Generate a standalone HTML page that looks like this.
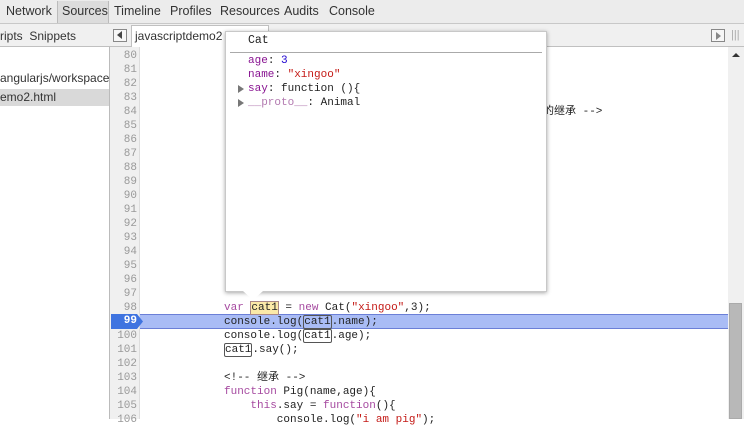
<!DOCTYPE html><html><head><meta charset="utf-8"><style>
*{margin:0;padding:0;box-sizing:border-box}
body{width:744px;height:419px;overflow:hidden;background:#fff;font-family:"Liberation Sans","Noto Sans CJK SC",sans-serif;font-size:12px;color:#222;position:relative}
.a{position:absolute;white-space:pre}
.mono{font-family:"Liberation Mono","Noto Sans CJK SC",monospace;font-size:11px}
.kw{color:#a64aa0}.st{color:#c41a16}.pr{color:#881391}.nu{color:#1c00cf}
.box{border:1px solid #555;border-radius:2px;padding:0}
</style></head><body>
<div class="a" style="left:0;top:0;width:744px;height:24px;background:#ececec;border-bottom:1px solid #c8c8c8"></div>
<div class="a" style="left:6px;top:4px;font-size:12.5px;color:#333">Network</div>
<div class="a" style="left:57px;top:1px;width:52px;height:22px;background:#dcdcdc;border-left:1px solid #bbb;border-right:1px solid #bbb"></div>
<div class="a" style="left:62px;top:4px;font-size:12.5px;color:#333">Sources</div>
<div class="a" style="left:114px;top:4px;font-size:12.5px;color:#333">Timeline</div>
<div class="a" style="left:170px;top:4px;font-size:12.5px;color:#333">Profiles</div>
<div class="a" style="left:220px;top:4px;font-size:12.5px;color:#333">Resources</div>
<div class="a" style="left:284px;top:4px;font-size:12.5px;color:#333">Audits</div>
<div class="a" style="left:329px;top:4px;font-size:12.5px;color:#333">Console</div>
<!-- second row -->
<div class="a" style="left:0;top:24px;width:744px;height:23px;background:#f0f0f0;border-bottom:1px solid #c0c0c0"></div>
<div class="a" style="left:0;top:29px;color:#333">ripts&nbsp; Snippets</div>
<div class="a" style="left:131px;top:25px;width:138px;height:22px;background:#fff;border:1px solid #c0c0c0;border-bottom:none"></div>
<div class="a" style="left:135px;top:29px;color:#333">javascriptdemo2</div>
<div class="a" style="left:113px;top:29px;width:14px;height:13px;border:1px solid #888;background:#f6f6f6"></div>
<div class="a" style="left:117px;top:31px;width:0;height:0;border-top:4px solid transparent;border-bottom:4px solid transparent;border-right:5px solid #444"></div>
<div class="a" style="left:711px;top:29px;width:14px;height:13px;border:1px solid #888;background:#f6f6f6"></div>
<div class="a" style="left:716px;top:32px;width:0;height:0;border-top:4px solid transparent;border-bottom:4px solid transparent;border-left:5px solid #888"></div>
<div class="a" style="left:731px;top:29px;color:#aaa;font-size:11px">|||</div>
<!-- sidebar -->
<div class="a" style="left:0;top:47px;width:110px;height:372px;background:#fff;border-right:1px solid #bbb"></div>
<div class="a" style="left:0;top:71px;color:#333">angularjs/workspace</div>
<div class="a" style="left:0;top:89px;width:109px;height:17px;background:#d9d9d9"></div>
<div class="a" style="left:0;top:90px;color:#333">emo2.html</div>
<!-- gutter -->
<div class="a" style="left:110px;top:47px;width:30px;height:372px;background:#f0f0f0;border-right:1px solid #ddd"></div>
<div class="a mono" style="left:110px;top:49px;width:27px;text-align:right;line-height:14px;color:#999">80
81
82
83
84
85
86
87
88
89
90
91
92
93
94
95
96
97
98

100
101
102
103
104
105
106</div>
<!-- scrollbar -->
<div class="a" style="left:728px;top:47px;width:16px;height:372px;background:#f0f0f0"></div>
<div class="a" style="left:732px;top:53px;width:0;height:0;border-left:4px solid transparent;border-right:4px solid transparent;border-bottom:4px solid #333"></div>
<div class="a" style="left:729px;top:303px;width:13px;height:116px;background:#b8b8b8;border:1px solid #aaa"></div>
<!-- highlight line -->
<div class="a" style="left:140px;top:314px;width:588px;height:15px;background:#a9bcf5;border-top:1px solid #6b7fd7;border-bottom:1px solid #6b7fd7"></div>
<svg class="a" style="left:111px;top:314px" width="32" height="15"><path d="M0 0H26L32 7.5L26 15H0Z" fill="#3f74e0"/></svg>
<div class="a mono" style="left:110px;top:314px;width:27px;text-align:right;line-height:15px;color:#fff;font-weight:bold">99</div>
<!-- code -->
<div class="a mono" style="left:532px;top:105px;line-height:14px">型的继承 --&gt;</div>
<div class="a mono" style="left:224px;top:301px;line-height:14px"><span class="kw">var</span> <span style="background:#fbe9a8;border:1px solid #a88">cat1</span> = <span class="kw">new</span> Cat(<span class="st">"xingoo"</span>,3);
console.log(<span class="box">cat1</span>.name);
console.log(<span class="box">cat1</span>.age);
<span class="box">cat1</span>.say();

&lt;!-- 继承 --&gt;
<span class="kw">function</span> Pig(name,age){
    <span class="kw">this</span>.say = <span class="kw">function</span>(){
        console.log(<span class="st">"i am pig"</span>);</div>
<!-- popup -->
<div class="a" style="left:225px;top:31px;width:322px;height:261px;background:#fff;border:1px solid #c8c8c8;box-shadow:0 1px 4px rgba(0,0,0,.35)"></div>
<svg class="a" style="left:243px;top:291px" width="20" height="10"><path d="M0 0L10 9L20 0Z" fill="#fff"/></svg>
<div class="a mono" style="left:248px;top:34px;font-size:11.5px;color:#222">Cat</div>
<div class="a" style="left:230px;top:52px;width:312px;height:1px;background:#aaa"></div>
<div class="a mono" style="left:248px;top:54px;line-height:14px"><span class="pr">age</span>: <span class="nu">3</span>
<span class="pr">name</span>: <span class="st">"xingoo"</span>
<span class="pr">say</span>: function (){
<span style="color:#b37ab0">__proto__</span>: Animal</div>
<div class="a" style="left:238px;top:85px;width:0;height:0;border-top:4px solid transparent;border-bottom:4px solid transparent;border-left:6px solid #777"></div>
<div class="a" style="left:238px;top:99px;width:0;height:0;border-top:4px solid transparent;border-bottom:4px solid transparent;border-left:6px solid #777"></div>
</body></html>
